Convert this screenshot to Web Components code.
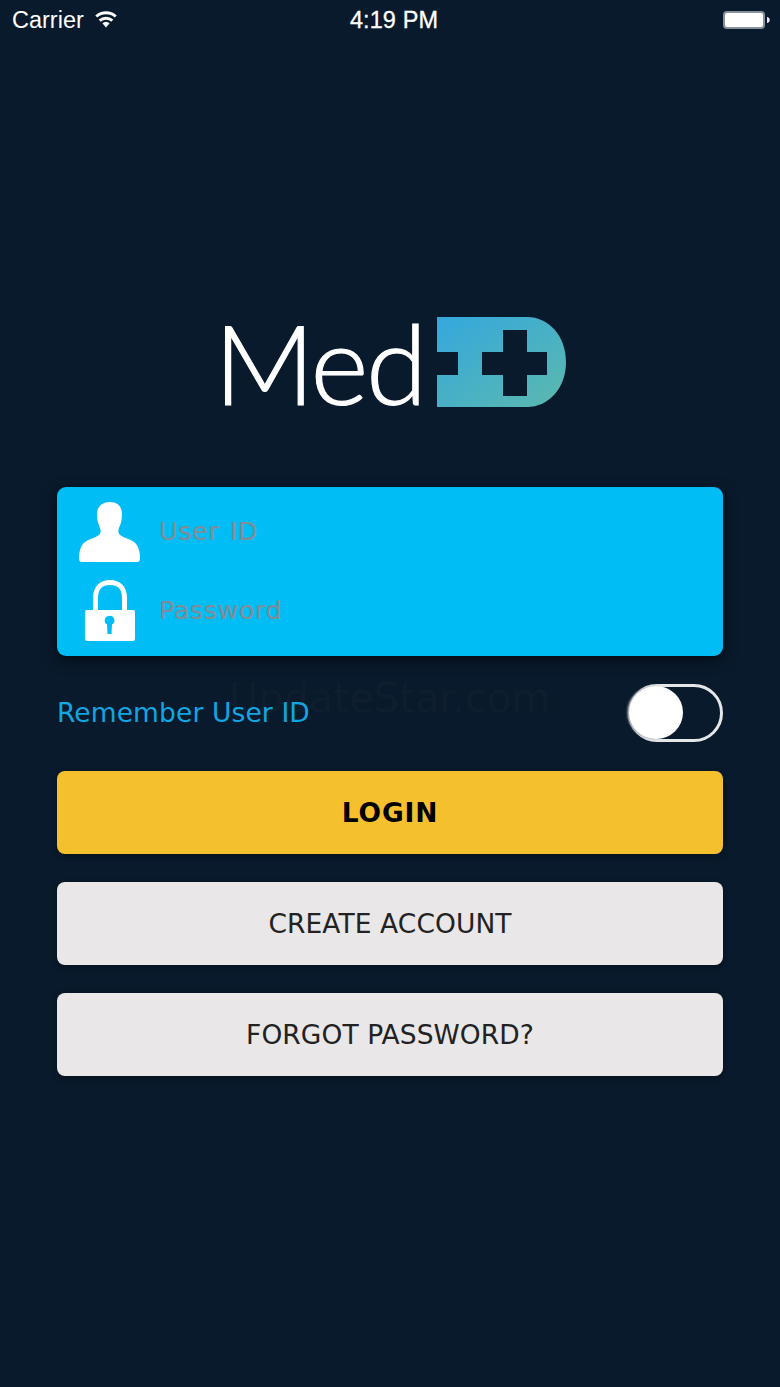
<!DOCTYPE html>
<html lang="en">
<head>
<meta charset="utf-8">
<title>MedID</title>
<style>
html, body { margin: 0; padding: 0; background: #091a2c; }
body { font-family: "DejaVu Sans", Verdana, sans-serif; }
</style>
</head>
<body>
<login-screen>
  <status-bar></status-bar>
  <med-logo></med-logo>
  <login-card>
    <login-field icon="user" style="word-spacing:2px">User ID</login-field>
    <login-field icon="lock">Password</login-field>
  </login-card>
  <remember-row>Remember User ID</remember-row>
  <app-button variant="primary">LOGIN</app-button>
  <app-button>CREATE ACCOUNT</app-button>
  <app-button>FORGOT PASSWORD?</app-button>
</login-screen>

<script>
function define(name, html, props = {}) {
  const template = document.createElement("template");
  template.innerHTML = html;
  customElements.define(name, class extends HTMLElement {
    constructor() {
      super();
      this.attachShadow({ mode: "open" });
      this.shadowRoot.appendChild(template.content.cloneNode(true));
      if (props.init) props.init(this);
    }
  });
}

define("login-screen", `
<style>
:host { display: flex; flex-direction: column; min-height: 1387px; box-sizing: border-box; padding: 0 57px; background: #091a2c; }
</style>
<slot></slot>
`);

define("status-bar", `
<style>
:host { display: grid; grid-template-columns: 1fr auto 1fr; align-items: center; height: 40px; margin: 0 -57px; padding: 0 10px 0 12px; color: #fff; font: 23.500px "Liberation Sans", Arial, sans-serif; }
.left { display: flex; align-items: center; gap: 11px; }
.time { letter-spacing: .1px; -webkit-text-stroke: .3px #fff; padding-left: 6px; }
.right { display: flex; justify-content: flex-end; }
svg { display: block; }
</style>
<div class="left">
  <span>Carrier</span>
  <svg width="22" height="18" viewBox="0 0 22 18" style="margin-top:-3px">
    <path d="M11 17.500 7.400 13.300a5.500 5.500 0 0 1 7.200 0Z" fill="#fff"/>
    <path d="M4.700 10.600a9.600 9.600 0 0 1 12.600 0M1.300 6.500a14.600 14.600 0 0 1 19.400 0" fill="none" stroke="#fff" stroke-width="3"/>
  </svg>
</div>
<span class="time">4:19 PM</span>
<div class="right">
  <svg width="47" height="18" viewBox="0 0 47 18">
    <rect x="1" y="1" width="40" height="16" rx="3" fill="#fff" stroke="#87929d" stroke-width="2"/>
    <path d="M44 6c1.600.2 2.700 1.300 2.700 3s-1.100 2.800-2.700 3Z" fill="#e6eaed"/>
  </svg>
</div>
`);

define("med-logo", `
<style>
:host { display: flex; align-items: flex-end; height: 91px; margin: 276px 0 80px 0; padding-left: 157px; color: #fff; }
.name { font: 300 111px/91px Lato, "Liberation Sans", sans-serif; letter-spacing: -2.500px; -webkit-text-stroke: 1.200px #fff; width: 223px; height: 91px; white-space: nowrap; position: relative; top: 1px; }
svg { display: block; flex: none; }
</style>
<span class="name">Med</span>
<svg width="130" height="91" viewBox="0 0 130 91">
  <defs>
    <linearGradient id="g" x1="0" y1="0" x2="1" y2="1">
      <stop offset="0" stop-color="#34a8de"/>
      <stop offset="1" stop-color="#5cb9ad"/>
    </linearGradient>
  </defs>
  <path fill="url(#g)" fill-rule="evenodd" d="M0 1H90C112 1 129 20 129 46 129 72 112 91 90 91H0V59H21V36H0ZM66 14V36H45V59H66V80H90V59H110V36H90V14Z"/>
</svg>
`);

define("login-card", `
<style>
:host { display: flex; flex-direction: column; height: 169px; box-sizing: border-box; padding: 5px 0 0 0; background: #00bdf6; border-radius: 9px; box-shadow: 0 4px 14px rgba(0,0,0,.55); }
</style>
<slot></slot>
`);

const ICONS = {
  user: `<svg width="62" height="60" viewBox="0 0 62 60"><path fill="#fff" d="M31 0c8 0 12 5 12 12 0 5-1 10-3 14-1 3-1 5 1 7 4 3 10 4 14 7 4 3 6 9 6 16 0 3-1 4-3 4H3c-2 0-3-1-3-4 0-7 2-13 6-16 4-3 10-4 14-7 2-2 2-4 1-7-2-4-3-9-3-14C18 5 23 0 31 0Z"/></svg>`,
  lock: `<svg width="50" height="61" viewBox="0 0 50 61"><path fill="none" stroke="#fff" stroke-width="5" d="M10.500 31V18C10.500 8 16 2.500 25 2.500S39.500 8 39.500 18v13"/><path fill="#fff" fill-rule="evenodd" d="M2 30H48a2 2 0 0 1 2 2V59a2 2 0 0 1-2 2H2a2 2 0 0 1-2-2V32a2 2 0 0 1 2-2ZM24 36a4.500 4.500 0 0 0-2 8.400L22.500 54h4L27 44.400A4.500 4.500 0 0 0 24 36Z"/></svg>`
};

define("login-field", `
<style>
:host { display: flex; align-items: center; height: 79px; color: #7f8d98; font-size: 25.500px; letter-spacing: .5px; -webkit-text-stroke: .2px #7f8d98; }
.icon { width: 102px; flex: none; display: flex; justify-content: center; padding-left: 3px; box-sizing: border-box; }
.text { position: relative; top: -1px; }
svg { display: block; }
</style>
<div class="icon"></div>
<span class="text"><slot></slot></span>
`, {
  init(el) {
    el.shadowRoot.querySelector(".icon").innerHTML = ICONS[el.getAttribute("icon")];
  }
});

define("toggle-switch", `
<style>
:host { display: block; position: relative; width: 95px; height: 58px; box-sizing: border-box; border: 3px solid #e4e6e8; border-radius: 29px; }
.knob { position: absolute; left: -2px; top: -1px; width: 54px; height: 53px; border-radius: 50%; background: #fff; box-shadow: -2px 0 2px rgba(150,160,170,.85); }
</style>
<div class="knob"></div>
`);

define("remember-row", `
<style>
:host { display: flex; align-items: center; justify-content: space-between; position: relative; height: 58px; margin: 28px 0 29px; color: #11a6e2; font-size: 26.500px; letter-spacing: .12px; }
.mark { position: absolute; left: 172px; top: -9px; font-size: 40px; letter-spacing: 0; color: #0e1e2e; white-space: nowrap; }
.label { position: relative; top: -1px; }
</style>
<span class="mark">UpdateStar.com</span>
<span class="label"><slot></slot></span>
<toggle-switch></toggle-switch>
`);

define("app-button", `
<style>
:host { display: flex; align-items: center; justify-content: center; height: 83px; margin-bottom: 28px; border-radius: 8px; background: #e9e7e8; color: #222; font-size: 26.500px; letter-spacing: .08px; box-shadow: 0 2px 6px rgba(0,0,0,.35); }
:host([variant="primary"]) { background: #f5c02e; color: #000; font-weight: 700; letter-spacing: .8px; }
</style>
<slot></slot>
`);
</script>
</body>
</html>
